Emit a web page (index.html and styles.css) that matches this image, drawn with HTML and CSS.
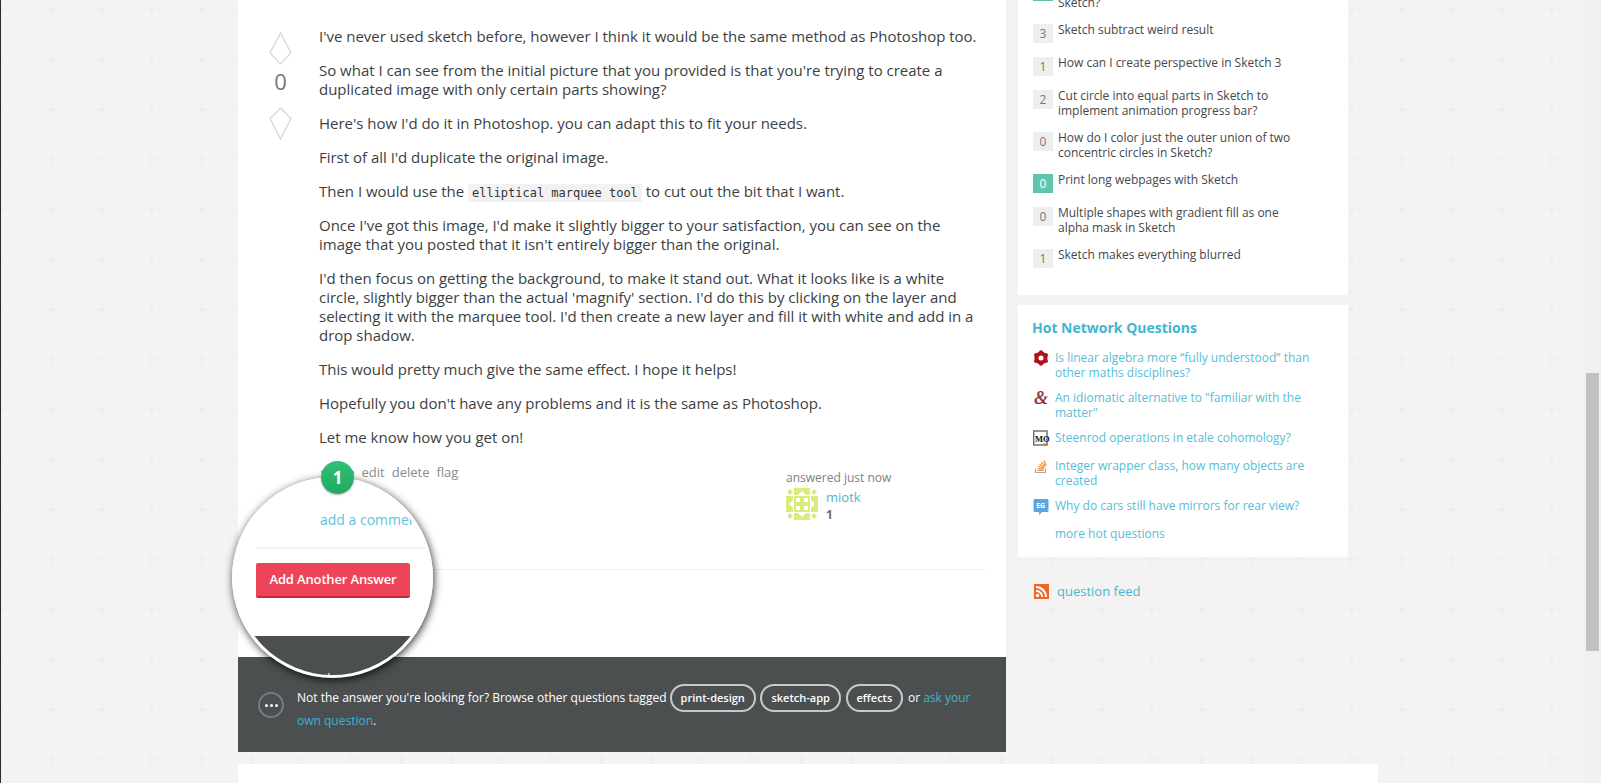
FILE: index.html
```html
<!DOCTYPE html>
<html lang="en">
<head>
<meta charset="utf-8">
<title>Sketch question</title>
<link rel="stylesheet" href="styles.css">
</head>
<body>
<div class="page">
  <div class="wrap">
    <div class="columns">
      <main class="main">
        <div class="answer-card">
          <div class="answer">
            <div class="votes">
              <svg class="arrow" width="23" height="33" viewBox="0 0 23 33"><polygon points="11.5,1 22,21 11.5,32 1,21"/></svg>
              <div class="score">0</div>
              <svg class="arrow" width="23" height="33" viewBox="0 0 23 33"><polygon points="11.5,1 22,11.5 11.5,32 1,11.5"/></svg>
            </div>
            <div class="post">
              <p>I've never used sketch before, however I think it would be the same method as Photoshop too.</p>
              <p>So what I can see from the initial picture that you provided is that you're trying to create a duplicated image with only certain parts showing?</p>
              <p>Here's how I'd do it in Photoshop. you can adapt this to fit your needs.</p>
              <p>First of all I'd duplicate the original image.</p>
              <p>Then I would use the <code>elliptical marquee tool</code> to cut out the bit that I want.</p>
              <p>Once I've got this image, I'd make it slightly bigger to your satisfaction, you can see on the image that you posted that it isn't entirely bigger than the original.</p>
              <p>I'd then focus on getting the background, to make it stand out. What it looks like is a white circle, slightly bigger than the actual 'magnify' section. I'd do this by clicking on the layer and selecting it with the marquee tool. I'd then create a new layer and fill it with white and add in a drop shadow.</p>
              <p>This would pretty much give the same effect. I hope it helps!</p>
              <p>Hopefully you don't have any problems and it is the same as Photoshop.</p>
              <p>Let me know how you get on!</p>
              <div class="post-foot">
                <div class="post-menu"><span>share</span><span>edit</span><span>delete</span><span>flag</span></div>
                <div class="author">
                  <div class="asked">answered just now</div>
                  <div class="author-row">
                    <svg class="avatar" width="32" height="32" viewBox="0 0 32 32">
                      <path class="ava" fill-rule="evenodd" d="M8 8h16v16H8zM10 10v4h4v-4zM18 10v4h4v-4zM10 18v4h4v-4zM18 18v4h4v-4z"/>
                      <path class="ava" d="M8 0h16v7h-4l-4-4-4 4H8zM8 32h16v-7h-4l-4 4-4-4H8zM0 8v16h7v-4l-4-4 4-4V8zM32 8v16h-7v-4l4-4-4-4V8z"/>
                      <path class="ava" d="M4 1l3 3-3 3-3-3zM28 1l3 3-3 3-3-3zM4 25l3 3-3 3-3-3zM28 25l3 3-3 3-3-3z"/>
                    </svg>
                    <div class="author-info"><a class="author-name">miotk</a><b class="rep">1</b></div>
                  </div>
                </div>
              </div>
            </div>
          </div>
          <div class="answer-rule"></div>
        </div>
        <div class="notice">
          <div class="notice-icon"><i></i><i></i><i></i></div>
          <div class="notice-text">Not the answer you're looking for? Browse other questions tagged <a class="tag">print-design</a> <a class="tag">sketch-app</a> <a class="tag">effects</a> or <a class="link">ask your own question</a>.</div>
        </div>

        <div class="magnifier">
          <div class="lens">
            <div class="lens-comment">add a comment</div>
            <div class="lens-rule"></div>
            <div class="lens-button">Add Another Answer</div>
            <div class="lens-dark">the</div>
          </div>
        </div>
        <div class="step-badge">1</div>
      </main>

      <aside class="side">
        <section class="panel related">
          <div class="rel-item"><span class="count accepted"></span><span class="rel-text">How to create this effect in<br>Sketch?</span></div>
          <div class="rel-item"><span class="count">3</span><span class="rel-text">Sketch subtract weird result</span></div>
          <div class="rel-item"><span class="count">1</span><span class="rel-text">How can I create perspective in Sketch 3</span></div>
          <div class="rel-item"><span class="count">2</span><span class="rel-text">Cut circle into equal parts in Sketch to implement animation progress bar?</span></div>
          <div class="rel-item"><span class="count">0</span><span class="rel-text">How do I color just the outer union of two concentric circles in Sketch?</span></div>
          <div class="rel-item"><span class="count accepted">0</span><span class="rel-text">Print long webpages with Sketch</span></div>
          <div class="rel-item"><span class="count">0</span><span class="rel-text">Multiple shapes with gradient fill as one alpha mask in Sketch</span></div>
          <div class="rel-item"><span class="count">1</span><span class="rel-text">Sketch makes everything blurred</span></div>
        </section>

        <section class="panel hot">
          <h4 class="hot-title">Hot Network Questions</h4>
          <div class="hot-item">
            <svg class="site" width="16" height="16" viewBox="0 0 16 16"><circle cx="8" cy="8" r="4.500" fill="none" stroke="#b0101c" stroke-width="4"/><circle cx="8" cy="2.200" r="2" fill="#b0101c"/><circle cx="8" cy="13.800" r="2" fill="#b0101c"/><circle cx="3" cy="5.100" r="2" fill="#b0101c"/><circle cx="13" cy="5.100" r="2" fill="#b0101c"/><circle cx="3" cy="10.900" r="2" fill="#b0101c"/><circle cx="13" cy="10.900" r="2" fill="#b0101c"/></svg>
            <a>Is linear algebra more “fully understood” than other maths disciplines?</a>
          </div>
          <div class="hot-item">
            <svg class="site" width="16" height="16" viewBox="0 0 16 16"><text class="amp" x="1" y="14">&amp;</text></svg>
            <a>An idiomatic alternative to "familiar with the matter"</a>
          </div>
          <div class="hot-item">
            <svg class="site" width="16" height="16" viewBox="0 0 16 16"><rect x=".7" y="1" width="13.300" height="14" fill="#fff" stroke="#6a6a6a" stroke-width="1.400"/><rect x="10" y="13.600" width="4.600" height="1.400" fill="#c9792d"/><text class="mo" x="2" y="12">MO</text></svg>
            <a>Steenrod operations in etale cohomology?</a>
          </div>
          <div class="hot-item">
            <svg class="site" width="16" height="16" viewBox="0 0 16 16"><path d="M2.500 10.500v4h10v-4" fill="none" stroke="#a9a9a9" stroke-width="1.200"/><path d="M4.500 12.500h6M4.700 10.600l6 .6M5.300 8.500l5.800 1.500M6.500 6.300l5.200 2.700M8.300 4.200l4.300 3.900M10.800 2.500l2.700 4.800" fill="none" stroke="#f08a2c" stroke-width="1.200"/></svg>
            <a>Integer wrapper class, how many objects are created</a>
          </div>
          <div class="hot-item">
            <svg class="site" width="16" height="18" viewBox="0 0 16 18"><path d="M2 1h12a1.500 1.500 0 0 1 1.500 1.500v10a1.500 1.500 0 0 1-1.500 1.500H9l-3 3v-3H2a1.500 1.500 0 0 1-1.500-1.500v-10A1.500 1.500 0 0 1 2 1z" fill="#5aa6dc"/><text class="eg" x="3.200" y="10">EG</text></svg>
            <a>Why do cars still have mirrors for rear view?</a>
          </div>
          <a class="more-hot">more hot questions</a>
        </section>

        <div class="feed">
          <svg width="15" height="15" viewBox="0 0 15 15"><rect width="15" height="15" fill="#f26522"/><circle cx="3.500" cy="11.500" r="1.700" fill="#fff"/><path d="M2 6.800a6.200 6.200 0 0 1 6.200 6.200M2 3a10 10 0 0 1 10 10" fill="none" stroke="#fff" stroke-width="2"/></svg>
          <a>question feed</a>
        </div>
      </aside>
    </div>
    <div class="footer-card"></div>
  </div>
  <div class="scrollbar"><div class="thumb"></div></div>
</div>
</body>
</html>
```

FILE: styles.css
```css
* { box-sizing: border-box; }
html, body { margin: 0; padding: 0; height: 100%; overflow: hidden; }
body {
  font-family: "Open Sans", "Liberation Sans", sans-serif;
  color: #3c3f42;
  background-color: #f3f3f3;
  background-image: url("data:image/svg+xml,%3Csvg xmlns='http://www.w3.org/2000/svg' width='50' height='50'%3E%3Crect x='1' width='1' height='50' fill='%23f0f0f0'/%3E%3Crect y='9' width='50' height='1' fill='%23f0f0f0'/%3E%3Crect x='0' y='8' width='1' height='1' fill='%23e2e2e2'/%3E%3Crect x='2' y='8' width='1' height='1' fill='%23e2e2e2'/%3E%3Crect x='0' y='10' width='1' height='1' fill='%23e2e2e2'/%3E%3Crect x='2' y='10' width='1' height='1' fill='%23e2e2e2'/%3E%3C/svg%3E");
}
a { color: #4ab7d2; text-decoration: none; }

.page {
  display: flex;
  height: 783px;
  overflow: hidden;
  border-left: 1px solid #2b2b2b;
}
.wrap {
  flex: 1;
  padding-left: 237px;
}
.columns {
  display: grid;
  grid-template-columns: 768px 330px;
  column-gap: 12px;
  align-items: start;
}

/* Main column */
.main { position: relative; }
.answer-card {
  background: #fff;
  height: 657px;
  padding: 27px 20px 0 31px;
}
.answer { display: flex; height: 542px; }
.votes {
  width: 23px;
  margin-right: 27px;
  padding-top: 5px;
  display: flex;
  flex-direction: column;
  align-items: center;
}
.arrow { display: block; }
.arrow polygon { fill: #fff; stroke: #d4d4d4; stroke-width: 1.2; }
.score {
  height: 42px;
  font-size: 22px;
  line-height: 32px;
  color: #777;
}
.post { width: 668px; }
.post p {
  margin: 0 0 15px;
  font-size: 15px;
  line-height: 19px;
  letter-spacing: -0.015px;
}
code {
  font-family: "DejaVu Sans Mono", "Liberation Mono", monospace;
  font-size: 12px;
  line-height: 1;
  background: #f2f2f2;
  padding: 2px 4px;
  color: #333;
}
.post-foot {
  display: flex;
  justify-content: space-between;
  padding-top: 1px;
}
.post-menu {
  display: flex;
  gap: 7px;
  padding-left: 1.5px;
  font-size: 13px;
  line-height: 18px;
  color: #8a8a8a;
}
.author { width: 200px; padding-top: 7px; }
.asked { font-size: 12px; line-height: 16px; color: #808080; }
.author-row { display: flex; gap: 8px; margin-top: 2px; }
.avatar { display: block; }
.ava { fill: #dcec7c; }
.author-info { display: flex; flex-direction: column; padding-top: 1px; }
.author-name { font-size: 13px; line-height: 17px; }
.rep { font-size: 12px; line-height: 17px; color: #6d6d6d; }
.answer-rule { height: 1px; background: #efefef; margin-left: -12px; }

/* Dark notice */
.notice {
  background: #4c4f50;
  height: 95px;
  display: flex;
  gap: 13px;
  padding: 29px 30px 0 20px;
}
.notice-icon {
  flex: none;
  width: 26px;
  height: 26px;
  margin-top: 6px;
  border: 2px solid #717c81;
  border-radius: 50%;
  display: flex;
  align-items: center;
  justify-content: center;
  gap: 2px;
}
.notice-icon i { width: 3px; height: 3px; border-radius: 50%; background: #fff; }
.notice-text {
  color: #fff;
  font-size: 12px;
  line-height: 23px;
}
.tag {
  display: inline-block;
  height: 28px;
  line-height: 24px;
  margin: -4px 1.500px -4px 0;
  padding: 0 9px;
  border: 2px solid #c9c9c9;
  border-radius: 14px;
  color: #fff;
  font-size: 11px;
  font-weight: 600;
}
.link { color: #3db4d0; }

/* Magnifying lens over the content */
.magnifier {
  position: absolute;
  left: -6px;
  top: 477px;
  width: 201px;
  height: 201px;
  border-radius: 50%;
  box-shadow: 1px 2px 9px rgba(0, 0, 0, .8);
}
.lens {
  width: 100%;
  height: 100%;
  border: 3px solid #fff;
  border-radius: 50%;
  background: #fff;
  overflow: hidden;
  padding: 30px 0 0 21px;
}
.lens-comment {
  padding-left: 64px;
  font-size: 14px;
  line-height: 19px;
  color: #62c1da;
  white-space: nowrap;
}
.lens-rule {
  height: 2px;
  margin: 18px 0 14px;
  background: #f2f2f2;
}
.lens-button {
  width: 154px;
  height: 35px;
  border-radius: 2px;
  background: #ee4459;
  border-bottom: 2px solid #c42a3d;
  color: #fff;
  font-size: 13px;
  font-weight: 600;
  letter-spacing: -0.15px;
  line-height: 33px;
  text-align: center;
}
.lens-dark {
  height: 60px;
  margin: 38px 0 0 -21px;
  padding: 35px 0 0 88px;
  background: #4c4f50;
  color: #fff;
  font-size: 12px;
  line-height: 16px;
}
.step-badge {
  position: absolute;
  left: 83px;
  top: 461px;
  width: 33px;
  height: 33px;
  border-radius: 50%;
  background: linear-gradient(#2fc274, #21a85f);
  box-shadow: 0 1px 2px rgba(0, 0, 0, .3);
  color: #fff;
  font-size: 17px;
  font-weight: 700;
  line-height: 33px;
  text-align: center;
}

/* Sidebar */
.side { display: flex; flex-direction: column; }
.panel { background: #fff; }
.related { margin-top: -20px; padding: 0 15px 15px; height: 315px; }
.rel-item {
  display: flex;
  gap: 5px;
  min-height: 21px;
  margin-bottom: 12px;
}
.count {
  flex: none;
  width: 20px;
  height: 19px;
  margin-top: 2px;
  background: #eee;
  color: #777;
  font-size: 12px;
  line-height: 19px;
  text-align: center;
}
.count.accepted { background: #5fc6ad; color: #fff; }
.rel-text {
  width: 240px;
  font-size: 12px;
  line-height: 15px;
  letter-spacing: -0.02px;
  color: #44474a;
}
.hot {
  margin-top: 10px;
  height: 252px;
  padding: 13px 15px 0;
}
.hot-title {
  margin: 0 0 12px -1px;
  font-size: 14px;
  font-weight: 700;
  line-height: 20px;
  color: #3fb5d0;
}
.hot-item {
  display: flex;
  gap: 6px;
  min-height: 18px;
  margin-bottom: 10px;
  font-size: 12px;
  line-height: 15px;
}
.hot-item a { width: 262px; color: #58bcd6; }
.site { flex: none; display: block; overflow: visible; }
.amp { font-family: "Liberation Serif", serif; font-size: 18px; font-style: italic; font-weight: 700; fill: #8e3a42; }
.mo { font-family: "Liberation Serif", serif; font-size: 8.5px; font-weight: 700; fill: #111; }
.eg { font-family: "Open Sans", sans-serif; font-size: 7px; font-weight: 700; fill: #fff; }
.more-hot {
  display: block;
  margin: 5px 0 0 22px;
  font-size: 12px;
  line-height: 16px;
  color: #58bcd6;
}
.feed {
  display: flex;
  align-items: center;
  gap: 8px;
  margin-top: 25px;
  padding-left: 16px;
  font-size: 13px;
  line-height: 18px;
}
.feed svg { display: block; }

.footer-card {
  width: 1140px;
  height: 60px;
  margin-top: 12px;
  background: #fff;
}

/* Scrollbar */
.scrollbar {
  flex: none;
  width: 17px;
  background: #f1f1f1;
  padding: 373px 2px 0;
}
.thumb { height: 278px; background: #c1c1c1; }
```
